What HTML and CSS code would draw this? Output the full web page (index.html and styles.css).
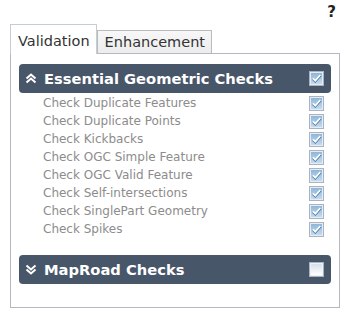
FILE: index.html
```html
<!DOCTYPE html>
<html lang="en">
<head>
    <meta charset="UTF-8">
    <title>Validation</title>
    <link rel="stylesheet" href="styles.css">
</head>
<body>
    <svg width="0" height="0" class="defs">
        <defs>
            <linearGradient id="on" x1="0" y1="0" x2="0" y2="1">
                <stop offset="0" stop-color="#8db6da"/>
                <stop offset="1" stop-color="#c4dbef"/>
            </linearGradient>
            <linearGradient id="off" x1="0" y1="0" x2="0" y2="1">
                <stop offset="0" stop-color="#d6e0ea"/>
                <stop offset="1" stop-color="#ffffff"/>
            </linearGradient>
            <symbol id="box-on" viewBox="0 0 15 15">
                <rect x="0.5" y="0.5" width="14" height="14" fill="#e8ecf2" stroke="#a9b3c2"/>
                <rect x="2" y="2" width="11" height="11" fill="url(#on)"/>
                <path d="M4 8 L6.3 10.3 L11.5 4.5" fill="none" stroke="#3d6f9e" stroke-width="2.4"/>
                <path d="M4 7.3 L6.3 9.6 L11.3 4" fill="none" stroke="#fff" stroke-width="1.8"/>
            </symbol>
            <symbol id="box-off" viewBox="0 0 15 15">
                <rect x="0.5" y="0.5" width="14" height="14" fill="#eef1f5" stroke="#a9b3c2"/>
                <rect x="2" y="2" width="11" height="11" fill="url(#off)"/>
            </symbol>
        </defs>
    </svg>

    <div class="help-row"><span class="help">?</span></div>

    <div class="tabs">
        <div class="tab active">Validation</div>
        <div class="tab">Enhancement</div>
    </div>

    <div class="panel">
        <div class="group-bar">
            <svg class="chevron" width="12" height="11" viewBox="0 0 12 11">
                <path d="M1.5 5.5 L6 1.5 L10.5 5.5 M1.5 9.5 L6 5.5 L10.5 9.5" fill="none" stroke="#fff" stroke-width="2"/>
            </svg>
            <span class="group-title">Essential Geometric Checks</span>
            <svg class="box" width="15" height="15"><use href="#box-on"/></svg>
        </div>
        <div class="check-list">
            <div class="check-row"><span>Check Duplicate Features</span><svg class="box" width="15" height="15"><use href="#box-on"/></svg></div>
            <div class="check-row"><span>Check Duplicate Points</span><svg class="box" width="15" height="15"><use href="#box-on"/></svg></div>
            <div class="check-row"><span>Check Kickbacks</span><svg class="box" width="15" height="15"><use href="#box-on"/></svg></div>
            <div class="check-row"><span>Check OGC Simple Feature</span><svg class="box" width="15" height="15"><use href="#box-on"/></svg></div>
            <div class="check-row"><span>Check OGC Valid Feature</span><svg class="box" width="15" height="15"><use href="#box-on"/></svg></div>
            <div class="check-row"><span>Check Self-intersections</span><svg class="box" width="15" height="15"><use href="#box-on"/></svg></div>
            <div class="check-row"><span>Check SinglePart Geometry</span><svg class="box" width="15" height="15"><use href="#box-on"/></svg></div>
            <div class="check-row"><span>Check Spikes</span><svg class="box" width="15" height="15"><use href="#box-on"/></svg></div>
        </div>

        <div class="group-bar second">
            <svg class="chevron" width="12" height="11" viewBox="0 0 12 11">
                <path d="M1.5 1.5 L6 5.5 L10.5 1.5 M1.5 5.5 L6 9.5 L10.5 5.5" fill="none" stroke="#fff" stroke-width="2"/>
            </svg>
            <span class="group-title">MapRoad Checks</span>
            <svg class="box" width="15" height="15"><use href="#box-off"/></svg>
        </div>
    </div>
</body>
</html>
```

FILE: styles.css
```css
body {
    margin: 0;
    font-family: "DejaVu Sans", Verdana, sans-serif;
    background: #fff;
    color: #333;
}
.defs {
    position: absolute;
}
.help-row {
    height: 24px;
    display: flex;
    justify-content: flex-end;
    align-items: center;
    padding-right: 11px;
}
.help {
    font-weight: bold;
    font-size: 15px;
    color: #222;
}
.tabs {
    display: flex;
    align-items: flex-end;
    margin-left: 10px;
    height: 29px;
}
.tab {
    font-size: 14.5px;
    color: #333;
    height: 22px;
    line-height: 22px;
    padding: 0 6px 0 7px;
    border: 1px solid #bbb;
    border-bottom: none;
    background: linear-gradient(#f7f7f7, #ececec);
}
.tab.active {
    height: 29px;
    line-height: 33px;
    border-color: #c4ccd6;
    background: #fff;
    position: relative;
    z-index: 1;
    margin-bottom: -1px;
}
.panel {
    margin-left: 10px;
    width: 330px;
    height: 255px;
    border: 1px solid #b4b8c0;
    box-sizing: border-box;
    padding: 10px 8px 0 8px;
}
.group-bar {
    height: 29px;
    background: #48566a;
    border-radius: 4px;
    display: flex;
    align-items: center;
    padding: 0 7px 0 6px;
    color: #fff;
}
.group-bar.second {
    margin-top: 17px;
}
.chevron {
    margin-right: 7px;
}
.group-title {
    flex: 1;
    font-weight: bold;
    font-size: 14.7px;
}
.box {
    display: block;
}
.check-list {
    padding: 1px 0 0 24px;
}
.check-row {
    height: 18px;
    display: flex;
    align-items: center;
    justify-content: space-between;
    padding-right: 7px;
    font-size: 12px;
    color: #8c8c8c;
}
```
